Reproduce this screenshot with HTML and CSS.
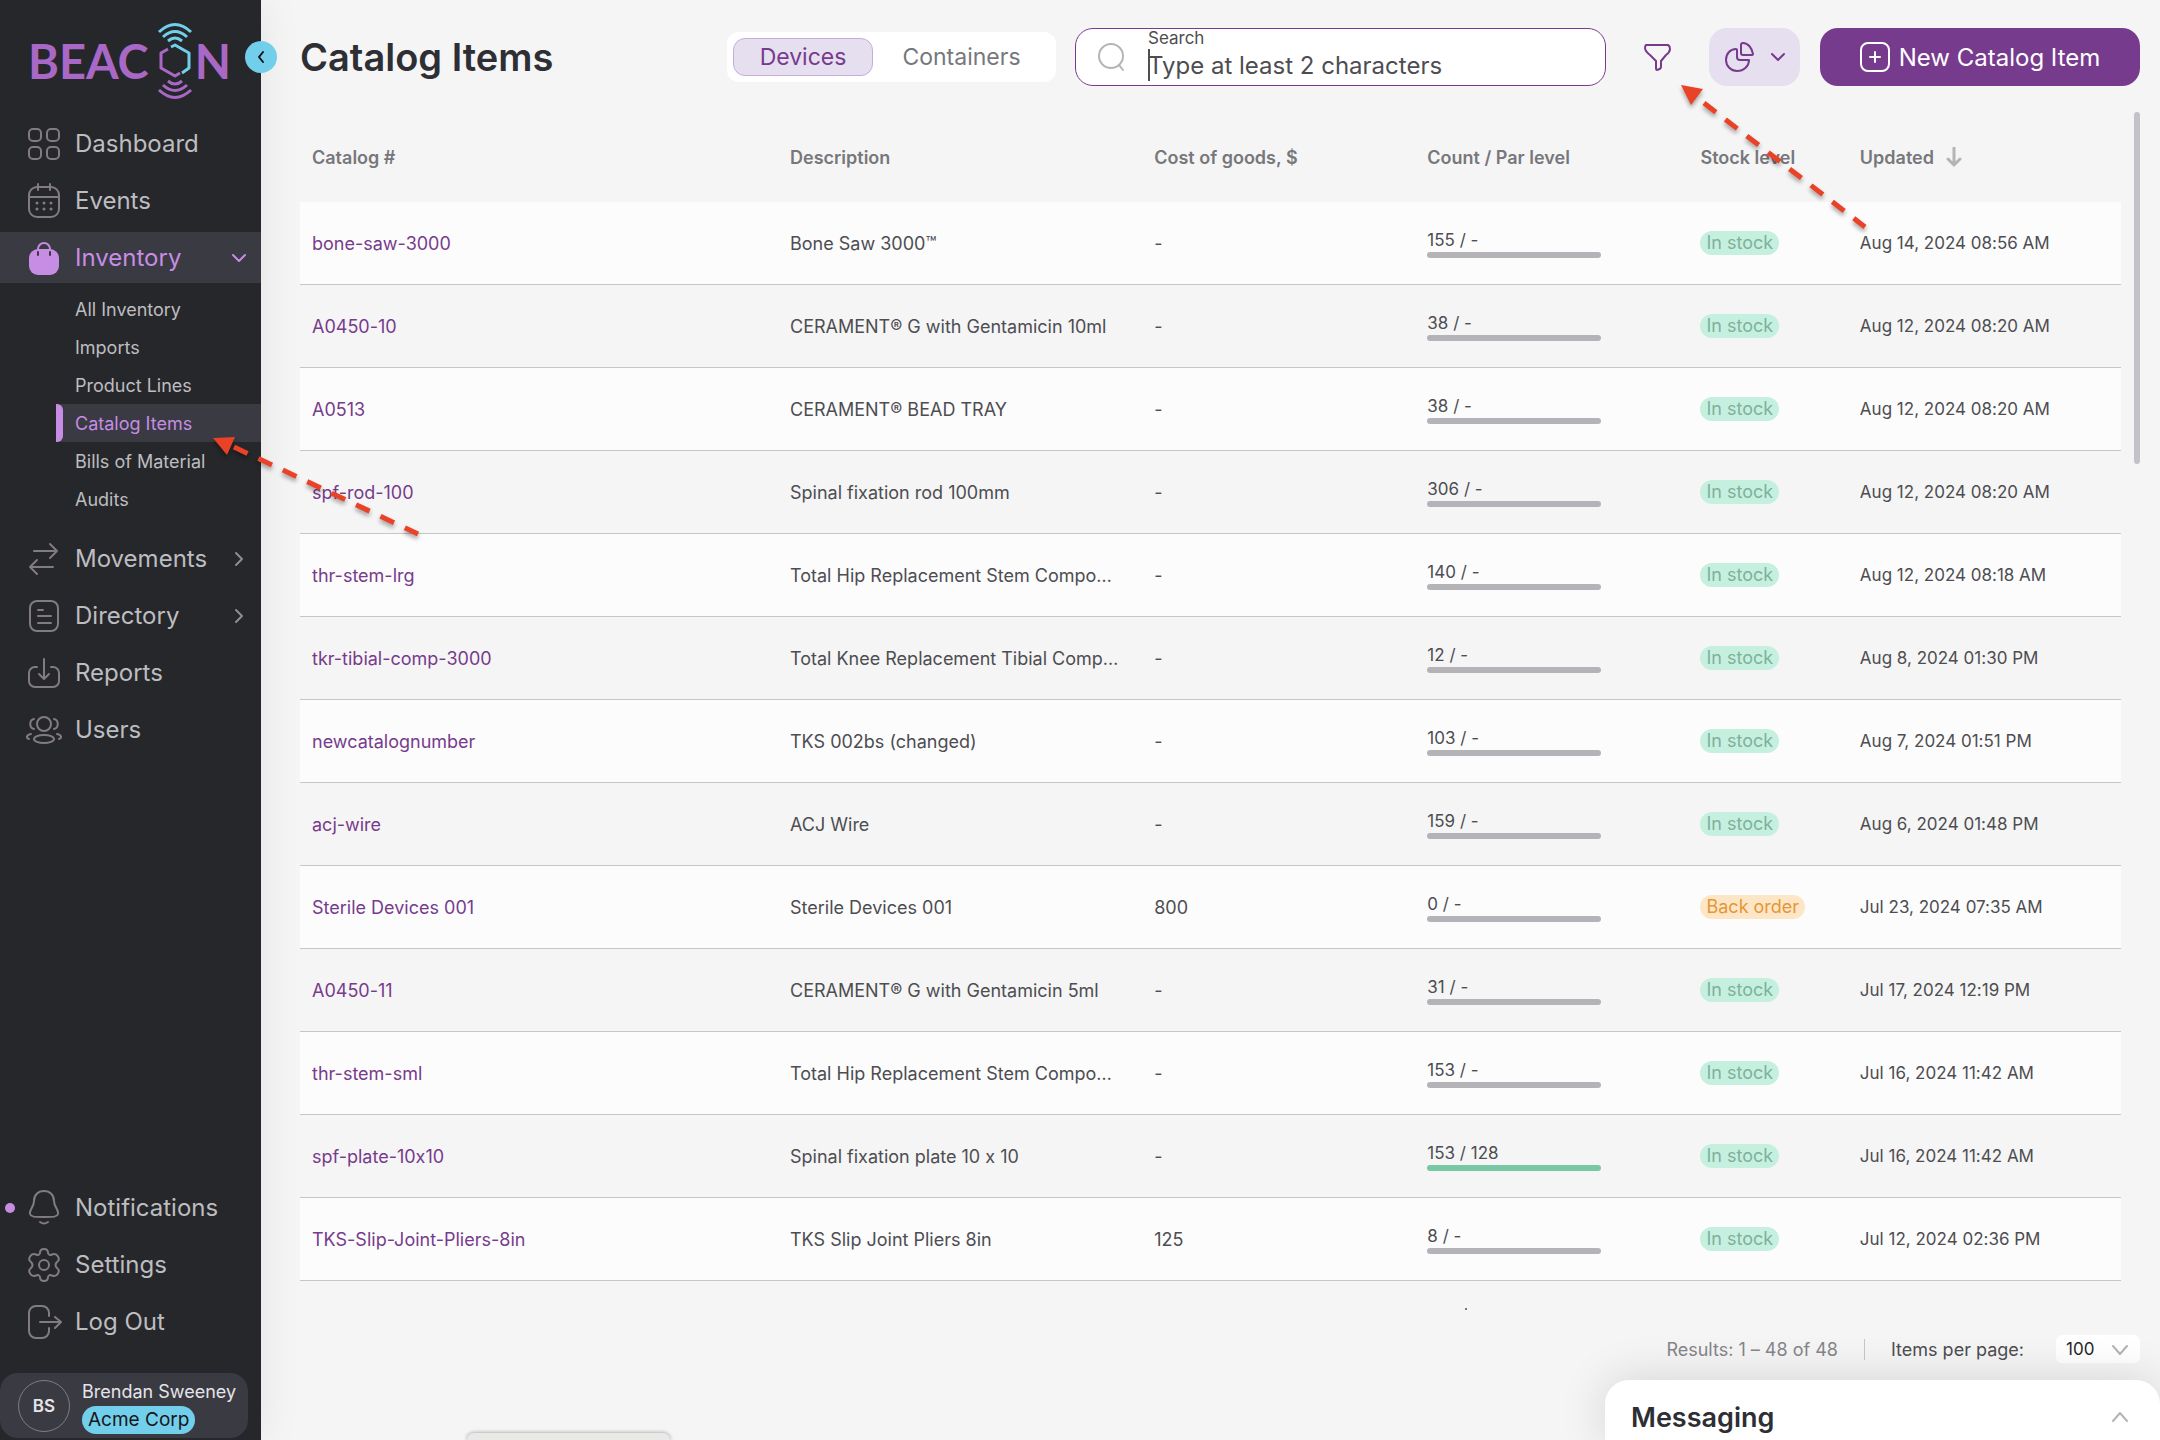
FILE: index.html
```html
<!DOCTYPE html>
<html lang="en">
<head>
<meta charset="utf-8">
<meta name="viewport" content="width=device-width, initial-scale=1">
<title>Catalog Items</title>
<link rel="stylesheet" href="styles.css">
</head>
<body>
<div class="app">
  <aside class="sidebar">
    <div class="brand">
      <span>BEAC</span>
      <svg class="brand-mark" viewBox="0 0 36 78" width="36" height="78">
        <g stroke="#72cfeb"><path d="M2 10Q18-5 34 10M6 15Q18 4 30 15M11 19Q18 13 25 19"/><path d="M14 25l4-2 14 8v15l-7 5"/></g>
        <g stroke="#a968c6"><path d="M2 68Q18 83 34 68M6 63Q18 74 30 63M11 59Q18 65 25 59"/><path d="M11 27l-7 4v15l14 8 5-3"/></g>
      </svg>
      <span>N</span>
    </div>
    <button class="collapse" type="button" aria-label="Collapse menu"><svg viewBox="0 0 12 14" width="12" height="14"><path d="M8 2L4 7l4 5"/></svg></button>
    <nav class="nav">
      <ul class="nav-list">
        <li><a class="nav-link" href="#"><svg class="icon" viewBox="0 0 36 36"><rect x="3" y="3" width="12" height="12" rx="4"/><rect x="21" y="3" width="12" height="12" rx="4"/><rect x="3" y="21" width="12" height="12" rx="4"/><rect x="21" y="21" width="12" height="12" rx="4"/></svg><span>Dashboard</span></a></li>
        <li><a class="nav-link" href="#"><svg class="icon" viewBox="0 0 36 36"><rect x="3" y="4" width="30" height="30" rx="8"/><path d="M3 14h30M12 1v6M24 1v6"/><path class="dots" d="M11 20h0M18 20h0M25 20h0M11 26h0M18 26h0M25 26h0"/></svg><span>Events</span></a></li>
        <li>
          <a class="nav-link nav-link-open" href="#"><svg class="icon" viewBox="0 0 36 36"><rect x="3" y="9" width="30" height="26" rx="9" fill="currentColor" stroke="none"/><path d="M12 12V9a6 6 0 0 1 12 0v3"/><path d="M12 12v3M24 12v3" stroke="#393a42"/></svg><span>Inventory</span><svg class="caret" viewBox="0 0 16 16"><path d="M2 5l6 6 6-6"/></svg></a>
          <ul class="subnav">
            <li><a href="#">All Inventory</a></li>
            <li><a href="#">Imports</a></li>
            <li><a href="#">Product Lines</a></li>
            <li><a class="current" href="#">Catalog Items</a></li>
            <li><a href="#">Bills of Material</a></li>
            <li><a href="#">Audits</a></li>
          </ul>
        </li>
        <li><a class="nav-link" href="#"><svg class="icon" viewBox="0 0 36 36"><path d="M8 10h23M24 3l7 7-7 7M27 26H4M11 19l-7 7 7 7"/></svg><span>Movements</span><svg class="caret" viewBox="0 0 16 16"><path d="M5 2l6 6-6 6"/></svg></a></li>
        <li><a class="nav-link" href="#"><svg class="icon" viewBox="0 0 36 36"><rect x="4" y="3" width="28" height="30" rx="7"/><path d="M12 12h5M12 18h13M12 25h13"/></svg><span>Directory</span><svg class="caret" viewBox="0 0 16 16"><path d="M5 2l6 6-6 6"/></svg></a></li>
        <li><a class="nav-link" href="#"><svg class="icon" viewBox="0 0 36 36"><path d="M11 12H9a6 6 0 0 0-6 6v8a6 6 0 0 0 6 6h18a6 6 0 0 0 6-6v-8a6 6 0 0 0-6-6h-2M18 4v20M13 19l5 5 5-5"/></svg><span>Reports</span></a></li>
        <li><a class="nav-link" href="#"><svg class="icon" viewBox="0 0 36 36"><circle cx="18" cy="12" r="7"/><ellipse cx="18" cy="27" rx="10" ry="4"/><path d="M8 7c-5 1-5 9 0 10M28 7c5 1 5 9 0 10M5 22c-5 1-5 4-2 5M31 22c5 1 5 4 2 5"/></svg><span>Users</span></a></li>
      </ul>
      <ul class="nav-list nav-bottom">
        <li><a class="nav-link unread" href="#"><svg class="icon" viewBox="0 0 36 36"><path d="M18 1c-6 0-10 4-10 10 0 6-5 9-4 13 1 3 4 3 14 3s13 0 14-3c1-4-4-7-4-13 0-6-4-10-10-10zM14 32q4 3 8 0"/></svg><span>Notifications</span></a></li>
        <li><a class="nav-link" href="#"><svg class="icon" viewBox="0 0 36 36"><path d="M14 6Q14 2 18 2Q22 2 22 6Q23 9 26 7.500Q30 6 32 9.500Q34 13 31 15Q28 18 31 21Q34 23 32 26.500Q30 30 26 28.500Q23 27 22 30Q22 34 18 34Q14 34 14 30Q13 27 10 28.500Q6 30 4 26.500Q2 23 5 21Q8 18 5 15Q2 13 4 9.500Q6 6 10 7.500Q13 9 14 6z"/><circle cx="18" cy="18" r="5"/></svg><span>Settings</span></a></li>
        <li><a class="nav-link" href="#"><svg class="icon" viewBox="0 0 36 36"><path d="M23 12V9a7 7 0 0 0-7-7h-6a7 7 0 0 0-7 7v18a7 7 0 0 0 7 7h6a7 7 0 0 0 7-7v-3M14 18h20M29 13l6 5-6 6"/></svg><span>Log Out</span></a></li>
      </ul>
    </nav>
    <div class="user">
      <span class="avatar">BS</span>
      <div><div class="user-name">Brendan Sweeney</div><span class="company">Acme Corp</span></div>
    </div>
  </aside>

  <main class="main">
    <header class="topbar">
      <h1>Catalog Items</h1>
      <div class="segmented">
        <button class="segment active" type="button">Devices</button>
        <button class="segment" type="button">Containers</button>
      </div>
      <div class="search">
        <svg viewBox="0 0 30 30" width="30" height="30"><circle cx="15" cy="14" r="12"/><path d="M23 23l4 5"/></svg>
        <div class="search-field">
          <label for="search">Search</label>
          <input id="search" type="text" placeholder="Type at least 2 characters">
          <span class="cursor"></span>
        </div>
      </div>
      <button class="filter" type="button" aria-label="Filter"><svg viewBox="0 0 30 30" width="30" height="30"><path d="M3 3h22q2 1 2 4 0 3-4 6l-5 6v6q0 2-4 3-1 0-1-2v-7l-6-6q-5-4-5-7 0-2 1-3z"/></svg></button>
      <button class="chart" type="button" aria-label="Chart view"><svg viewBox="0 0 32 32" width="32" height="32"><path d="M12 8C6 8 2 13 2 19c0 6 5 11 11 11 7 0 12-5 12-11h-9q-3 0-3-3V9q0-1-1-1zM17 4q0-2 2-2c5 0 9 5 10 11q0 1-2 1h-8q-2 0-2-2z"/></svg><svg viewBox="0 0 16 16" width="16" height="16"><path d="M2 5l6 6 6-6"/></svg></button>
      <button class="create" type="button"><svg viewBox="0 0 30 30" width="30" height="30"><rect x="1" y="1" width="28" height="28" rx="7"/><path d="M15 10v10M10 15h10"/></svg><span>New Catalog Item</span></button>
    </header>

    <div class="scroller">
      <table class="grid">
        <colgroup><col class="c-id"><col class="c-desc"><col class="c-std"><col class="c-std"><col class="c-stock"><col class="c-std"></colgroup>
        <thead>
          <tr><th>Catalog #</th><th>Description</th><th>Cost of goods, $</th><th>Count / Par level</th><th>Stock level</th><th><span class="sorted">Updated <svg viewBox="0 0 16 20" width="16" height="20"><path d="M8 1v17M2 12l6 6 6-6"/></svg></span></th></tr>
        </thead>
        <tbody>
          <tr><td><a href="#">bone-saw-3000</a></td><td>Bone Saw 3000™</td><td>-</td><td><div class="count">155 / -</div></td><td><span class="badge">In stock</span></td><td class="date">Aug 14, 2024 08:56 AM</td></tr>
          <tr><td><a href="#">A0450-10</a></td><td>CERAMENT® G with Gentamicin 10ml</td><td>-</td><td><div class="count">38 / -</div></td><td><span class="badge">In stock</span></td><td class="date">Aug 12, 2024 08:20 AM</td></tr>
          <tr><td><a href="#">A0513</a></td><td>CERAMENT® BEAD TRAY</td><td>-</td><td><div class="count">38 / -</div></td><td><span class="badge">In stock</span></td><td class="date">Aug 12, 2024 08:20 AM</td></tr>
          <tr><td><a href="#">spf-rod-100</a></td><td>Spinal fixation rod 100mm</td><td>-</td><td><div class="count">306 / -</div></td><td><span class="badge">In stock</span></td><td class="date">Aug 12, 2024 08:20 AM</td></tr>
          <tr><td><a href="#">thr-stem-lrg</a></td><td>Total Hip Replacement Stem Compo…</td><td>-</td><td><div class="count">140 / -</div></td><td><span class="badge">In stock</span></td><td class="date">Aug 12, 2024 08:18 AM</td></tr>
          <tr><td><a href="#">tkr-tibial-comp-3000</a></td><td>Total Knee Replacement Tibial Comp…</td><td>-</td><td><div class="count">12 / -</div></td><td><span class="badge">In stock</span></td><td class="date">Aug 8, 2024 01:30 PM</td></tr>
          <tr><td><a href="#">newcatalognumber</a></td><td>TKS 002bs (changed)</td><td>-</td><td><div class="count">103 / -</div></td><td><span class="badge">In stock</span></td><td class="date">Aug 7, 2024 01:51 PM</td></tr>
          <tr><td><a href="#">acj-wire</a></td><td>ACJ Wire</td><td>-</td><td><div class="count">159 / -</div></td><td><span class="badge">In stock</span></td><td class="date">Aug 6, 2024 01:48 PM</td></tr>
          <tr><td><a href="#">Sterile Devices 001</a></td><td>Sterile Devices 001</td><td>800</td><td><div class="count">0 / -</div></td><td><span class="badge badge-late">Back order</span></td><td class="date">Jul 23, 2024 07:35 AM</td></tr>
          <tr><td><a href="#">A0450-11</a></td><td>CERAMENT® G with Gentamicin 5ml</td><td>-</td><td><div class="count">31 / -</div></td><td><span class="badge">In stock</span></td><td class="date">Jul 17, 2024 12:19 PM</td></tr>
          <tr><td><a href="#">thr-stem-sml</a></td><td>Total Hip Replacement Stem Compo…</td><td>-</td><td><div class="count">153 / -</div></td><td><span class="badge">In stock</span></td><td class="date">Jul 16, 2024 11:42 AM</td></tr>
          <tr><td><a href="#">spf-plate-10x10</a></td><td>Spinal fixation plate 10 x 10</td><td>-</td><td><div class="count count-full">153 / 128</div></td><td><span class="badge">In stock</span></td><td class="date">Jul 16, 2024 11:42 AM</td></tr>
          <tr><td><a href="#">TKS-Slip-Joint-Pliers-8in</a></td><td>TKS Slip Joint Pliers 8in</td><td>125</td><td><div class="count">8 / -</div></td><td><span class="badge">In stock</span></td><td class="date">Jul 12, 2024 02:36 PM</td></tr>
        </tbody>
      </table>
      <span class="scrollbar"></span>
      <span class="next-row-peek"></span>
    </div>

    <footer class="pager">
      <span class="results">Results: 1 – 48 of 48</span>
      <label for="per-page">Items per page:</label>
      <div class="select">
        <select id="per-page"><option>100</option></select>
        <svg viewBox="0 0 16 16" width="16" height="16"><path d="M1 4l7 8 7-8"/></svg>
      </div>
    </footer>
  </main>

  <div class="drawer-tab"></div>
  <section class="messaging">
    <h2>Messaging</h2>
    <button type="button" aria-label="Expand messaging"><svg viewBox="0 0 16 16" width="16" height="16"><path d="M1 12l7-8 7 8"/></svg></button>
  </section>

  <svg class="pointer pointer-nav" viewBox="0 0 220 110" width="220" height="110"><path class="head" d="M8 8l22-1-8 18z"/><path class="tail" d="M29 17l184 87"/></svg>
  <svg class="pointer pointer-filter" viewBox="0 0 200 160" width="200" height="160"><path class="head" d="M6 5l22 4-12 16z"/><path class="tail" d="M29 23l161 124"/></svg>
</div>
</body>
</html>
```
FILE: styles.css
```css
* { box-sizing: border-box; }
body {
  margin: 0;
  background: #f5f5f5;
  color: #4d4d52;
  font-family: Inter, "Open Sans", sans-serif;
  font-size: 18px;
  font-feature-settings: "calt" 0;
}
ul { list-style: none; margin: 0; padding: 0; }
a { text-decoration: none; color: inherit; }
button, input, select { font: inherit; color: inherit; border: 0; background: none; padding: 0; margin: 0; }
svg { display: block; flex: none; fill: none; stroke: currentColor; stroke-width: 2; stroke-linecap: round; stroke-linejoin: round; }

.app { position: relative; display: flex; min-height: 100vh; overflow: hidden; }

/* Sidebar */
.sidebar {
  position: relative;
  display: flex;
  flex-direction: column;
  flex: none;
  width: 261px;
  background: #26272b;
  color: #bdbdc0;
  box-shadow: 0 0 40px rgba(0, 0, 0, .08);
}
.brand {
  display: flex;
  align-items: center;
  height: 118px;
  padding: 3px 0 0 28px;
  color: #a968c6;
  font-family: Lato, sans-serif;
  font-size: 47px;
  font-weight: 700;
}
.brand-mark { margin: 0 2px 0 8px; stroke-linecap: butt; stroke-width: 3; }
.collapse {
  position: absolute;
  top: 41px;
  right: -16px;
  width: 32px;
  height: 32px;
  border-radius: 50%;
  background: #72cfeb;
  color: #111;
  display: grid;
  place-items: center;
}
.nav { flex: 1; display: flex; flex-direction: column; justify-content: space-between; }
.nav-list { display: flex; flex-direction: column; gap: 6px; }
.nav-link {
  position: relative;
  display: flex;
  align-items: center;
  gap: 13px;
  height: 51px;
  padding: 0 14px 0 26px;
  font-size: 24px;
}
.nav-link span { flex: 1; }
.icon { width: 36px; height: 36px; color: #817b82; }
.dots { stroke-width: 3; }
.caret { width: 16px; height: 16px; color: #8f8d94; }
.nav-link-open { background: #393a42; color: #c78de4; }
.nav-link-open svg { color: #c78de4; }
.subnav { padding: 7px 0 9px 56px; }
.subnav a { display: flex; align-items: center; height: 38px; padding-left: 19px; }
.subnav .current { position: relative; color: #c78de4; background: #393a42; }
.subnav .current::before {
  content: "";
  position: absolute;
  left: 0;
  width: 7px;
  height: 100%;
  border-radius: 0 6px 6px 0;
  background: #c78de4;
}
.unread::before {
  content: "";
  position: absolute;
  left: 5px;
  width: 10px;
  height: 10px;
  border-radius: 50%;
  background: #c78de4;
}
.nav-bottom { padding-bottom: 26px; }
.user {
  display: flex;
  align-items: center;
  gap: 12px;
  height: 65px;
  margin: 0 13px 2px 0;
  padding-left: 18px;
  border-radius: 18px;
  background: #393a42;
  color: #e6e4e8;
  line-height: 28px;
}
.avatar {
  display: grid;
  place-items: center;
  width: 52px;
  height: 52px;
  border: 1px solid #817b82;
  border-radius: 50%;
  font-size: 17px;
  font-weight: 600;
}
.user-name { white-space: nowrap; }
.company {
  display: block;
  width: max-content;
  padding: 0 6px;
  border-radius: 14px;
  background: #72cfeb;
  color: #16161a;
  font-size: 19px;
}

/* Top bar */
.main { flex: 1; min-width: 0; display: flex; flex-direction: column; padding: 28px 20px 0 39px; }
.topbar { display: flex; align-items: center; height: 58px; }
h1 { flex: 1; margin: 0; color: #2e2f35; font-size: 38px; font-weight: 600; white-space: nowrap; }
.segmented {
  display: flex;
  align-items: center;
  height: 50px;
  padding: 0 6px;
  margin-right: 19px;
  border-radius: 12px;
  background: #fff;
  font-size: 23px;
}
.segment { width: 140px; height: 38px; border-radius: 12px; color: #77777c; }
.segment + .segment { width: 177px; }
.segment.active { border: 1px solid #c3aeda; background: #e6dff0; color: #773b8d; }
.search {
  display: flex;
  align-items: center;
  gap: 22px;
  width: 531px;
  height: 58px;
  padding-left: 20px;
  border: 1px solid #773b8d;
  border-radius: 18px;
  background: #fff;
}
.search > svg { color: #b5b3b8; }
.search-field { position: relative; flex: 1; display: flex; flex-direction: column; height: 56px; }
.search-field label { font-size: 17px; line-height: 19px; }
.search-field input { height: 34px; font-size: 24px; outline: 0; }
.search-field input::placeholder { color: #4d4d52; opacity: 1; }
.cursor { position: absolute; left: 0; top: 20px; width: 2px; height: 32px; background: #4d4d52; }
.filter { display: grid; place-items: center; width: 103px; color: #773b8d; }
.chart {
  display: flex;
  align-items: center;
  justify-content: center;
  gap: 14px;
  width: 91px;
  height: 58px;
  border-radius: 18px;
  background: #e6dff0;
  color: #773b8d;
}
.create {
  display: flex;
  align-items: center;
  justify-content: center;
  gap: 9px;
  width: 320px;
  height: 58px;
  margin-left: 20px;
  border-radius: 18px;
  background: #773b8d;
  color: #fff;
  font-size: 24px;
}

/* Table */
.scroller { position: relative; flex: 1; margin-top: 26px; padding-right: 19px; }
.scrollbar { position: absolute; top: 0; right: 0; width: 6px; height: 352px; border-radius: 3px; background: #c3c2c6; }
.next-row-peek { position: absolute; left: 1165px; bottom: 25px; width: 2px; height: 2px; background: #77777c; }
.grid { width: 100%; table-layout: fixed; border-collapse: separate; border-spacing: 0; }
.c-id { width: 26.25%; }
.c-desc { width: 20%; }
.c-std { width: 15%; }
.grid th { height: 90px; padding: 0 0 0 12px; text-align: left; font-weight: 600; color: #77777c; white-space: nowrap; }
.grid td {
  height: 83px;
  padding: 0 0 0 12px;
  border-bottom: 1px solid #c6c6c9;
  white-space: nowrap;
}
.grid tbody tr:nth-child(odd) { background: #fcfcfc; }
.grid a { color: #773b8d; }
.grid .date { font-size: 17px; }
.sorted { display: flex; align-items: center; gap: 12px; }
.sorted svg { color: #b5b3b8; stroke-width: 3; }
.count { width: 174px; font-size: 17px; line-height: 24px; }
.count::after { content: ""; display: block; height: 6px; border-radius: 3px; background: #b5b3b8; }
.count-full::after { background: #78c8a5; }
.badge {
  display: inline-block;
  padding: 0 6px;
  border-radius: 12px;
  background: #c5f0df;
  color: #7fb09c;
  line-height: 24px;
}
.badge-late { background: #fde6c5; color: #e69638; }

/* Pager */
.pager { display: flex; align-items: center; justify-content: flex-end; height: 28px; margin-bottom: 77px; }
.results { padding-right: 26px; margin-right: 26px; border-right: 1px solid #c6c6c9; color: #85858a; }
.select { position: relative; width: 84px; margin-left: 32px; }
.select select {
  appearance: none;
  width: 100%;
  height: 28px;
  padding-left: 10px;
  border-radius: 6px;
  background: #fff;
  color: #26272b;
  font-size: 17px;
}
.select svg { position: absolute; top: 7px; right: 12px; color: #b5b3b8; pointer-events: none; }

/* Docked panels */
.messaging {
  position: absolute;
  right: 0;
  bottom: 0;
  display: flex;
  align-items: center;
  justify-content: space-between;
  width: 555px;
  height: 60px;
  padding: 14px 32px 0 26px;
  border-radius: 24px 24px 0 0;
  background: #fff;
  box-shadow: 0 0 48px rgba(0, 0, 0, .14);
}
.messaging h2 { margin: 0; color: #2e2f35; font-size: 27px; font-weight: 600; }
.messaging button { color: #b5b3b8; }
.drawer-tab {
  position: absolute;
  left: 467px;
  bottom: 0;
  width: 203px;
  height: 7px;
  border-radius: 8px 8px 0 0;
  background: #e9e9e7;
  box-shadow: 0 0 4px rgba(0, 0, 0, .4);
}

/* Annotation arrows */
.pointer { position: absolute; pointer-events: none; filter: drop-shadow(0 3px 2px rgba(0, 0, 0, .35)); }
.pointer-nav { left: 205px; top: 430px; }
.pointer-filter { right: 285px; top: 80px; }
.head { fill: #ea4226; stroke: none; }
.tail { stroke: #ea4226; stroke-width: 5; stroke-linecap: butt; stroke-dasharray: 15 12; }
```
